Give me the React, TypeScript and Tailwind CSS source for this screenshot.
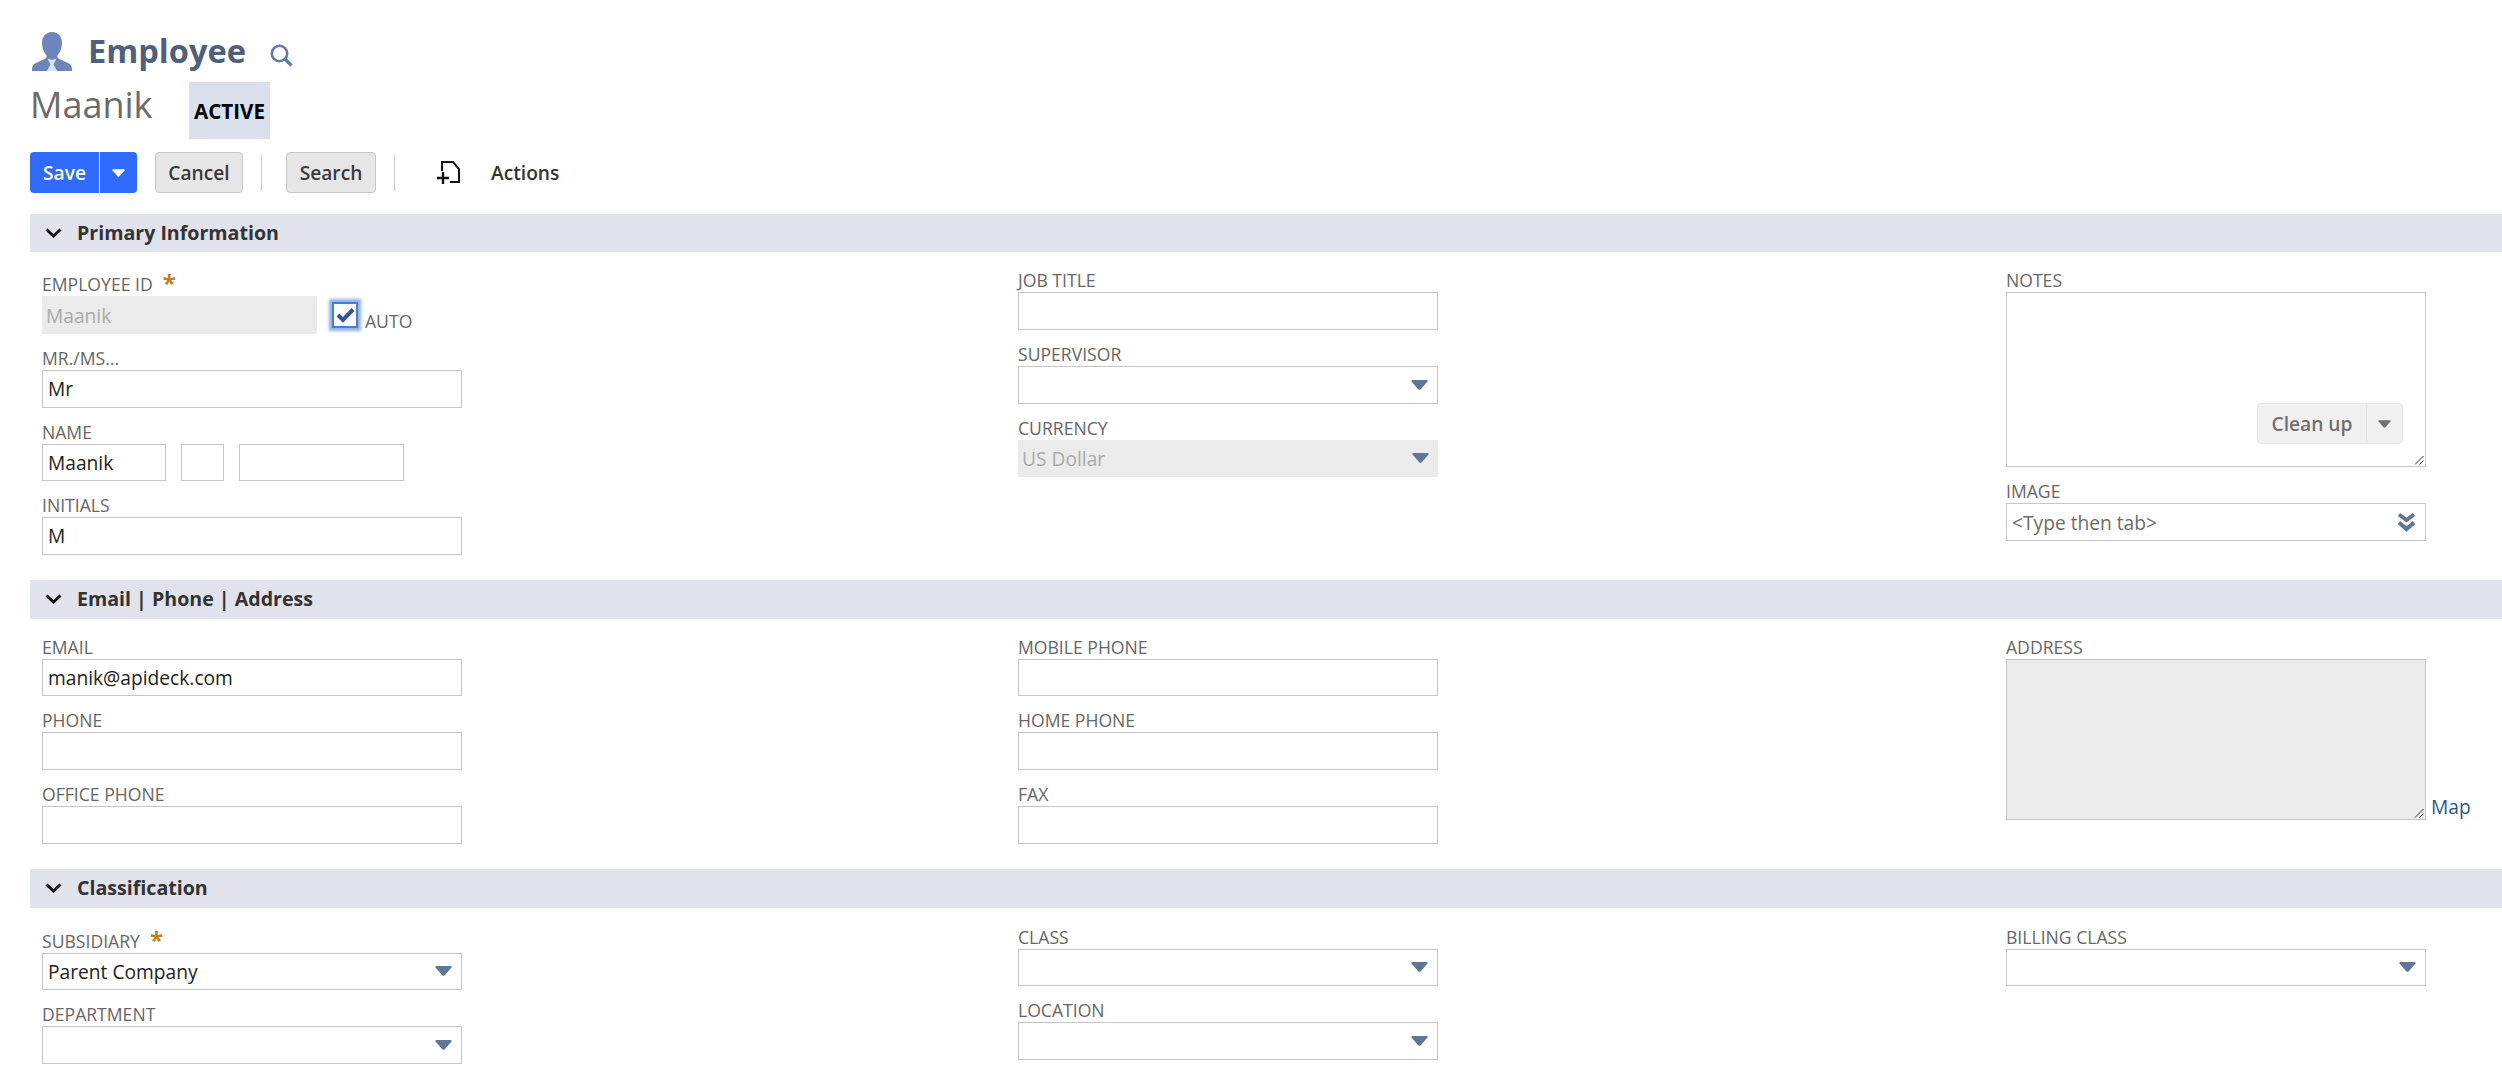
import type { FC, ReactNode } from "react";

const Caret: FC<{ color?: string; w?: number; h?: number }> = ({ color = "#5f7699", w = 17, h = 10 }) => (
  <svg width={w} height={h} viewBox="0 0 17 10" className="shrink-0">
    <path d="M0.5 1.5Q0 0 1.5 0H15.5Q17 0 16.5 1.5L9.8 9.2Q8.5 10.4 7.2 9.2Z" fill={color} />
  </svg>
);

const DoubleChevron: FC = () => (
  <svg width="19" height="20" viewBox="0 0 19 20" className="shrink-0">
    <path d="M2 2.5L9.5 8L17 2.5M2 10.5L9.5 17L17 10.5" fill="none" stroke="#5f7699" strokeWidth="4" />
  </svg>
);

const Grip: FC = () => (
  <svg width="10" height="10" viewBox="0 0 10 10" className="absolute right-[1px] bottom-[1px]">
    <path d="M1 9.5L9.5 1M5.5 9.5L9.5 5.5" stroke="#333" strokeWidth="1" fill="none" />
  </svg>
);

const PersonIcon: FC = () => (
  <svg width="40" height="39" viewBox="0 0 40 39" className="shrink-0">
    <path d="M20 0C26.500 0 30 5 30 11C30 16.500 27.500 21 25.500 23.500C25 25.500 26 26.500 29 27.800L35 30.500C38.500 32 40 34 40 37V39H0V37C0 34 1.500 32 5 30.500L11 27.800C14 26.500 15 25.500 14.500 23.500C12.500 21 10 16.500 10 11C10 5 13.500 0 20 0Z" fill="#6c86bd" />
    <path d="M15.500 26.500L20 28L24.500 26.500L21.500 32.500L25 39H15L18.500 32.500Z" fill="#dde3ee" />
  </svg>
);

const Box: FC<{ children?: ReactNode; disabled?: boolean; w?: string; placeholder?: boolean }> = ({ children, disabled, w = "w-[420px]", placeholder }) => (
  <div
    className={`${w} h-[37.6px] flex items-center justify-between pr-[9px] text-[19.2px] leading-none whitespace-nowrap ${
      disabled ? "bg-[#ebebeb] text-[#aaaaaa] pl-[4px]" : "bg-white border border-[#c6c6c6] pl-[5px]"
    } ${placeholder ? "text-[#6b6b6b]" : disabled ? "" : "text-[#222222]"}`}
  >
    {children}
  </div>
);

const Field: FC<{ label: string; required?: boolean; children?: ReactNode }> = ({ label, required, children }) => (
  <div>
    <div className={`flex items-end pb-[1px] text-[17.6px] leading-[22px] text-[#666666] ${required ? "h-[40px]" : "h-[36px]"}`}>
      {label}
      {required && <span className="ml-[10px] text-[24px] leading-[26px] font-bold text-[#c4801f] self-start mt-[14px] h-[20px]">*</span>}
    </div>
    {children}
  </div>
);

const Select: FC<{ value?: string; disabled?: boolean }> = ({ value, disabled }) => (
  <Box disabled={disabled}>
    <span>{value}</span>
    <Caret />
  </Box>
);

const Section: FC<{ title: string; bodyClass?: string; children: ReactNode }> = ({ title, bodyClass = "pt-[4px]", children }) => (
  <section>
    <div className="ml-[30px] h-[38.4px] bg-[#e0e3eb] flex items-center">
      <svg width="17" height="11" viewBox="0 0 17 11" className="ml-[15px] shrink-0">
        <path d="M1.5 1.5L8.5 8L15.5 1.5" fill="none" stroke="#111111" strokeWidth="3" />
      </svg>
      <h2 className="ml-[15px] pb-[1px] text-[19.6px] font-bold text-[#333333] leading-none">{title}</h2>
    </div>
    <div className={`grid grid-cols-[976px_988px_420px] pl-[42px] pb-[25.6px] ${bodyClass}`}>{children}</div>
  </section>
);

const GrayButton: FC<{ label: string; w: string }> = ({ label, w }) => (
  <button className={`${w} h-[41px] pt-[1px] rounded-[4px] border border-[#c6c6c6] bg-[#e6e6e6] text-[19.2px] font-semibold text-[#3a3a3a]`}>
    {label}
  </button>
);

const Divider: FC = () => <div className="w-[1px] h-[36px] bg-[#cccccc]" />;

const App: FC = () => {
  return (
    <div className="h-screen overflow-hidden bg-white font-['Open_Sans',sans-serif]">
      <div className="h-[82px] pl-[32px] pt-[32px] flex items-start">
        <PersonIcon />
        <h1 className="ml-[16px] -mt-[3px] text-[32.6px] leading-[44px] font-bold text-[#4f5f7d]">Employee</h1>
        <svg width="23" height="23" viewBox="0 0 23 23" className="ml-[24px] mt-[12px] shrink-0">
          <circle cx="9.5" cy="9.5" r="7.7" fill="none" stroke="#5f7ba6" strokeWidth="2.6" />
          <path d="M15 15L21.5 21.5" fill="none" stroke="#5f7ba6" strokeWidth="3.2" />
        </svg>
      </div>

      <div className="h-[57px] pl-[30px] flex items-start">
        <div className="w-[159px] text-[36px] leading-[46px] text-[#6b6b6b]">Maanik</div>
        <div className="w-[81px] h-[57px] bg-[#d9e0ec] flex items-center justify-center text-[20.6px] font-bold text-black pt-[2px]">ACTIVE</div>
      </div>

      <div className="mt-[13px] ml-[30px] h-[41px] flex items-center">
        <div className="w-[107px] h-[41px] rounded-[4px] bg-[#2f6bff] flex items-stretch text-white">
          <button className="w-[69px] pt-[1px] text-[19.2px] font-semibold">Save</button>
          <div className="w-[1px] bg-white" />
          <div className="flex-1 flex items-center justify-center">
            <Caret color="#ffffff" w={13} h={8} />
          </div>
        </div>
        <div className="ml-[18px]"><GrayButton label="Cancel" w="w-[88px]" /></div>
        <div className="ml-[18px]"><Divider /></div>
        <div className="ml-[24px]"><GrayButton label="Search" w="w-[90px]" /></div>
        <div className="ml-[18px]"><Divider /></div>
        <svg width="24" height="25" viewBox="0 0 24 25" className="ml-[41px] shrink-0">
          <path d="M6 11V2H17L23 9V22H14" fill="none" stroke="#111111" strokeWidth="2" />
          <path d="M1 18H13M7 12V24" fill="none" stroke="#111111" strokeWidth="2.4" />
        </svg>
        <span className="ml-[31px] pt-[1px] text-[19.2px] font-semibold text-[#333333]">Actions</span>
      </div>

      <div className="mt-[21px]">
        <Section title="Primary Information">
          <div>
            <Field label="EMPLOYEE ID" required>
              <div className="flex items-start">
                <Box disabled w="w-[275px]">Maanik</Box>
                <div className="ml-[15px] mt-[6px] w-[26px] h-[26px] bg-white border-2 border-[#4a7fd0] shadow-[0_0_3px_3px_#8fb2e6] flex items-center justify-center shrink-0">
                  <svg width="19" height="16" viewBox="0 0 19 16">
                    <path d="M2 8L7 13L17 2.5" fill="none" stroke="#2f5597" strokeWidth="4" />
                  </svg>
                </div>
                <span className="ml-[7px] mt-[14px] text-[17.6px] leading-[22px] text-[#666666]">AUTO</span>
              </div>
            </Field>
            <Field label="MR./MS..."><Box>Mr</Box></Field>
            <Field label="NAME">
              <div className="flex gap-[15px]">
                <Box w="w-[124px]">Maanik</Box>
                <Box w="w-[43px]" />
                <Box w="w-[165px]" />
              </div>
            </Field>
            <Field label="INITIALS"><Box>M</Box></Field>
          </div>
          <div>
            <Field label="JOB TITLE"><Box /></Field>
            <Field label="SUPERVISOR"><Select /></Field>
            <Field label="CURRENCY"><Select value="US Dollar" disabled /></Field>
          </div>
          <div>
            <Field label="NOTES">
              <div className="relative w-[420px] h-[175px] border border-[#c6c6c6] bg-white flex items-end justify-end pr-[22px] pb-[22px]">
                <div className="h-[41px] w-[146px] rounded-[4px] bg-[#f0f0f0] border border-[#e8e8e8] flex items-stretch text-[#707070]">
                  <span className="w-[108px] text-center text-[19.2px] font-semibold leading-[39px]">Clean up</span>
                  <div className="w-[1px] bg-[#e2e2e2]" />
                  <div className="flex-1 flex items-center justify-center">
                    <Caret color="#707070" w={13} h={8} />
                  </div>
                </div>
                <Grip />
              </div>
            </Field>
            <Field label="IMAGE">
              <Box placeholder>
                <span>&lt;Type then tab&gt;</span>
                <DoubleChevron />
              </Box>
            </Field>
          </div>
        </Section>

        <Section title="Email | Phone | Address">
          <div>
            <Field label="EMAIL"><Box>manik@apideck.com</Box></Field>
            <Field label="PHONE"><Box /></Field>
            <Field label="OFFICE PHONE"><Box /></Field>
          </div>
          <div>
            <Field label="MOBILE PHONE"><Box /></Field>
            <Field label="HOME PHONE"><Box /></Field>
            <Field label="FAX"><Box /></Field>
          </div>
          <div>
            <Field label="ADDRESS">
              <div className="flex items-end">
                <div className="relative w-[420px] h-[161px] border border-[#c6c6c6] bg-[#ebebeb] shrink-0">
                  <Grip />
                </div>
                <a className="ml-[5px] text-[19.2px] leading-[26px] text-[#2a5599]">Map</a>
              </div>
            </Field>
          </div>
        </Section>

        <Section title="Classification" bodyClass="pt-[5px]">
          <div>
            <Field label="SUBSIDIARY" required><Select value="Parent Company" /></Field>
            <Field label="DEPARTMENT"><Select /></Field>
          </div>
          <div>
            <Field label="CLASS"><Select /></Field>
            <Field label="LOCATION"><Select /></Field>
          </div>
          <div>
            <Field label="BILLING CLASS"><Select /></Field>
          </div>
        </Section>
      </div>
    </div>
  );
};

export default App;
